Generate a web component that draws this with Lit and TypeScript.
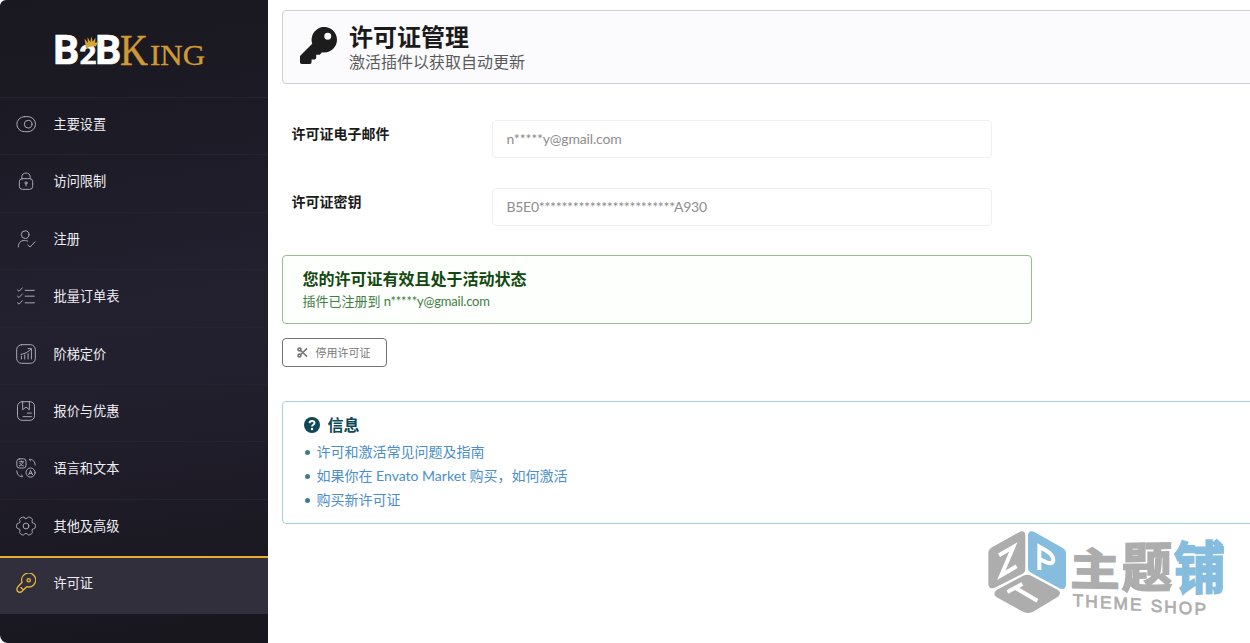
import { LitElement, html, css, svg } from "lit";
import { customElement } from "lit/decorators.js";

const icons = {
  toggle: svg`<rect x="1" y="3.2" width="22.400" height="18" rx="9"/><circle cx="14.600" cy="12.200" r="4.600"/>`,
  lock: svg`<rect x="4" y="9.2" width="16" height="12.8" rx="3.6"/><path d="M7 9V6.8C7 1 17 1 17 6.8V9"/><circle cx="12" cy="14.3" r="1.300"/><path d="M12 15.5v2.4"/>`,
  user: svg`<circle cx="11" cy="6.8" r="4.6"/><path d="M2.8 21.5c0-7 5-8 8.500-7.600q1.500 0 2.800.7M14.200 19.200l2.700 2.400 6-6.300"/>`,
  list: svg`<path d="M11 5.200h11M11 12.200h11M11 20.200h11M1.800 4.700l1.800 1.700 4-4.200M1.800 12.100l1.800 1.700 4-4.200M1.800 20.100l1.800 1.700 4-4.200"/>`,
  chart: svg`<rect x=".8" y=".8" width="22.4" height="22.4" rx="6"/><path d="M6.500 18v-3.500M10.500 18v-5M14.500 18v-6.500M18.500 18V9.500M6 12.500c5-.8 9-3.200 12-6.500M14.500 5.500H18.500V9"/>`,
  note: svg`<rect x="1.800" y=".8" width="20.4" height="22.4" rx="5.500"/><path d="M8 1v9.500l4-3.300 4 3.300V1M13.500 14.500h5M8.500 18.800h10"/>`,
  lang: svg`<rect x="1" y="1" width="11" height="11" rx="3"/><circle cx="17.500" cy="17.500" r="5.500"/><path d="M4 4.500h5M6.500 3.500v1M8.500 4.800C7.500 7.500 6 9 4 9.500M4.800 6.500c1 1.800 2.400 2.600 4.200 3M15.200 20l2.300-5 2.300 5M16 18.500h3M1 15.500c0 4 2.500 7 7 7l-1.200-2M23 8.500c0-4-2.500-7-7-7l1.200 2"/>`,
  gear: svg`<circle cx="12" cy="12" r="3.500"/><path d="M10 2Q12 4.800 14 2Q15 .6 16.600 1.500L18.800 2.800Q20.400 3.900 19.400 5.500Q18.200 8.300 21 8.700Q23.300 9 23.300 11V13Q23.300 15 21 15.300Q18.200 15.700 19.400 18.500Q20.400 20.100 18.800 21.200L16.600 22.500Q15 23.400 14 22Q12 19.200 10 22Q9 23.400 7.400 22.500L5.200 21.200Q3.600 20.100 4.600 18.500Q5.800 15.700 3 15.300Q.7 15 .7 13V11Q.7 9 3 8.700Q5.800 8.300 4.600 5.500Q3.600 3.900 5.200 2.800L7.400 1.500Q9 .6 10 2Z"/>`,
  key: svg`<path d="M21.200 14.300a8.400 8.400 0 0 1-8.300 2.100L8.200 21.100C6.900 22.800 4.900 23.400 3 22.800C1.400 22.200 1 20 1.300 18.600Q1.500 17.200 2.600 16.100L7.300 11.200A8.400 8.400 0 1 1 21.200 14.300ZM6 17.500l2.500 2.500"/><circle cx="15.200" cy="8.700" r="2"/>`,
};

const menu: { label: string; icon: keyof typeof icons; active?: boolean }[] = [
  { label: "主要设置", icon: "toggle" },
  { label: "访问限制", icon: "lock" },
  { label: "注册", icon: "user" },
  { label: "批量订单表", icon: "list" },
  { label: "阶梯定价", icon: "chart" },
  { label: "报价与优惠", icon: "note" },
  { label: "语言和文本", icon: "lang" },
  { label: "其他及高级", icon: "gear" },
  { label: "许可证", icon: "key", active: true },
];

@customElement("side-menu")
class SideMenu extends LitElement {
  static styles = css`
    :host { display: block; width: 268px; flex: none; border-radius: 6px 0 0 8px; overflow: hidden;
      background: linear-gradient(172deg, #19171f 0%, #1c1a24 18%, #232030 48%, #211e2c 66%, #1b1922 84%, #18161d 100%); }
    .logo { height: 97px; box-sizing: border-box; padding: 15px 0 0 50px; }
    .logo svg { display: block; }
    .white { fill: #fff; font: 700 41px Roboto, sans-serif; stroke: #fff; stroke-width: .7; }
    .two { font-size: 26px; }
    .gold { fill: #cf9a35; stroke: #cf9a35; stroke-width: .5; font: 45px "Liberation Serif", serif; }
    .small { font-size: 29.500px; stroke-width: .3; }
    .item { height: 57.4px; box-sizing: border-box; display: flex; align-items: center; gap: 17.500px; padding: 0 16px 4.500px;
      border-top: 1px solid #252330; color: #eeedf2; font: 13.200px/20px Lato, "Noto Sans CJK SC", sans-serif; }
    .item svg { width: 20px; height: 20px; fill: none; stroke: #aaa8b3; stroke-width: 1.200; stroke-linecap: round; stroke-linejoin: round; }
    .item.active { background: #322f3d; border-top: 2px solid #e8ac35; padding-bottom: 5.500px; }
    .active svg { stroke: #e9b63e; stroke-width: 1.600; }
  `;
  render() {
    return html`
      <div class="logo">
        <svg width="170" height="70" viewBox="50 15 170 70">
          <text class="white" x="53.300" y="64.300" textLength="26" lengthAdjust="spacingAndGlyphs">B</text>
          <text class="white two" x="79.500" y="64.300" textLength="17" lengthAdjust="spacingAndGlyphs">2</text>
          <text class="white" x="95.300" y="64.300" textLength="26" lengthAdjust="spacingAndGlyphs">B</text>
          <path fill="#d9a436" d="M86 48.500l-1.500-10 3.300 4.500-.3-6 2.800 5 1-5.500 1.500 5.200 2.700-4-.3 5.200 4-2-3.500 5.500q-5-.5-9.700 2.100z"/>
          <text class="gold" x="120" y="64.500" textLength="28" lengthAdjust="spacingAndGlyphs">K</text>
          <text class="gold small" x="150" y="64.500" textLength="55" lengthAdjust="spacingAndGlyphs">ING</text>
        </svg>
      </div>
      ${menu.map((m) => html`<div class="item ${m.active ? "active" : ""}"><svg viewBox="0 0 24 24">${icons[m.icon]}</svg><span>${m.label}</span></div>`)}
    `;
  }
}

@customElement("shop-mark")
class ShopMark extends LitElement {
  static styles = css`
    :host { display: block; }
    svg { display: block; }
    .g { fill: #adadad; }
    .b { fill: #86bddf; }
    .line { fill: none; stroke: #fff; stroke-width: 12; }
    .cjk { font: 700 140px "Noto Sans CJK SC", sans-serif; stroke-width: 5; }
    .g.cjk { stroke: #adadad; }
    .b.cjk { stroke: #86bddf; }
    .en { font: 52px "Liberation Sans", sans-serif; stroke: #adadad; stroke-width: 2; }
  `;
  render() {
    return html`<svg width="280" height="143" viewBox="0 0 840 429">
      <path class="g" d="M150 95Q166 90 166 108V208Q166 216 158 221L74 263Q55 270 55 250V160Q55 148 66 142Z"/>
      <path class="b" d="M192 95Q174 90 174 108V203Q174 213 183 218L268 265Q288 272 288 252V160Q288 150 278 144Z"/>
      <path class="g" d="M160 227Q172 221 184 227L264 270Q276 278 264 290L192 334Q174 344 156 334L80 292Q66 281 80 270Z"/>
      <path class="line" d="M87 166L130 141L94 226L140 199M208 210V140L229 152Q250 164 250 181Q248 194 230 187L208 177M112 276L157 252M137 264L202 302"/>
      <text class="g cjk" transform="translate(301 255) skewY(1) scale(1.060 .95)">主</text>
      <text class="g cjk" transform="translate(455 262) skewY(-1) scale(1.080 1.150)">题</text>
      <text class="b cjk" transform="translate(612 268) skewY(-1) scale(1.100 1.220)">铺</text>
      <text class="g en" transform="translate(308 318) skewY(4)" textLength="400">THEME SHOP</text>
    </svg>`;
  }
}

@customElement("app-root")
class AppRoot extends LitElement {
  static styles = css`
    :host { display: flex; position: relative; width: 1250px; height: 643px; overflow: hidden; background: #fff;
      font-family: Lato, "Noto Sans CJK SC", sans-serif; }
    main { flex: none; width: 982px; box-sizing: border-box; padding: 10px 0 0 14px; }
    .head { box-sizing: border-box; height: 74px; width: 990px; display: flex; gap: 12.500px; padding: 12px 16.500px; border: 1px solid #cfcfd1; border-radius: 4px; background: #fbfbfd; }
    .head svg { margin-top: 4px; width: 37px; height: 37px; fill: #1c1c1d; }
    .title { font-size: 24px; line-height: 28px; font-weight: 700; color: #1b1b1c; }
    .sub { font-size: 16px; line-height: 22px; color: #5a5a5b; }
    .form { display: grid; gap: 30px; padding: 36px 0 0 9.500px; }
    .row { display: grid; grid-template-columns: 200.500px 500px; }
    .label { font-size: 14px; line-height: 27px; font-weight: 700; color: #1b1b1c; }
    .input { box-sizing: border-box; height: 38px; padding: 0 13.500px; border: 1px solid #f0f0f0; border-radius: 4px; font-size: 14px; line-height: 35px; color: #8d8d8d; letter-spacing: -.17px; }
    .key { letter-spacing: -.28px; }
    .ok { box-sizing: border-box; width: 750px; height: 69px; margin-top: 29px; padding: 12px 19.500px; border: 1px solid #96bd8c; border-radius: 4px; background: #fdfffc; }
    .ok-title { font-size: 16px; line-height: 22px; font-weight: 700; color: #12480f; }
    .ok-sub { font-size: 13px; line-height: 22px; color: #3f7d42; }
    .mail { letter-spacing: -.2px; }
    .btn { box-sizing: border-box; display: flex; align-items: center; gap: 7.500px; width: 105px; height: 29px; margin-top: 14px; padding: 0 14px 1px; border: 1px solid #737373; border-radius: 4px; font-size: 11px; color: #777; }
    .btn svg { width: 11px; height: 11px; fill: none; stroke: #777; stroke-width: 1.800; }
    .info { box-sizing: border-box; width: 990px; height: 123px; margin-top: 34px; padding: 11px 20.500px; border: 1px solid #a3d3da; border-radius: 4px; }
    .info-title { display: flex; align-items: center; gap: 8px; font-size: 16px; line-height: 24px; font-weight: 700; color: #0d4858; }
    .info-title svg { width: 16px; height: 16px; }
    .link { display: flex; align-items: center; gap: 7px; height: 24px; font-size: 14px; line-height: 24px; color: #4b8ec9; }
    .links { padding-top: 3px; }
    .dot { width: 5px; height: 5px; margin-left: 1px; border-radius: 50%; background: #3f7c90; }
    .mark { position: absolute; right: 0; bottom: 0; }
  `;
  render() {
    const links = ["许可和激活常见问题及指南", "如果你在 Envato Market 购买，如何激活", "购买新许可证"];
    return html`
      <side-menu></side-menu>
      <main>
        <div class="head">
          <svg viewBox="0 0 512 512"><path d="M512 176c0 97-79 176-176 176-11 0-22-1-32-3l-24 27a24 24 0 0 1-18 8h-38v40a24 24 0 0 1-24 24h-40v40a24 24 0 0 1-24 24H24a24 24 0 0 1-24-24v-78a24 24 0 0 1 7-17l162-162a176 176 0 1 1 343-55zM336 128a48 48 0 1 0 96 0 48 48 0 0 0-96 0z"/></svg>
          <div><div class="title">许可证管理</div><div class="sub">激活插件以获取自动更新</div></div>
        </div>
        <div class="form">
          <div class="row"><div class="label">许可证电子邮件</div><div class="input">n*****y@gmail.com</div></div>
          <div class="row"><div class="label">许可证密钥</div><div class="input key">B5E0************************A930</div></div>
        </div>
        <div class="ok"><div class="ok-title">您的许可证有效且处于活动状态</div><div class="ok-sub">插件已注册到<span class="mail"> n*****y@gmail.com</span></div></div>
        <div class="btn"><svg viewBox="0 0 12 12"><circle cx="2.700" cy="2.700" r="1.600"/><circle cx="2.700" cy="9.300" r="1.600"/><path d="M4 3.800L11 10.500M4 8.200L11 1.500"/></svg><span>停用许可证</span></div>
        <div class="info">
          <div class="info-title"><svg viewBox="0 0 16 16"><circle cx="8" cy="8" r="8" fill="#0d4858"/><path d="M5.500 6.100C5.700 3.200 10.500 3.200 10.500 6.100C10.500 7.800 8 7.800 8 9.500" fill="none" stroke="#fff" stroke-width="1.900"/><circle cx="8" cy="12" r="1.200" fill="#fff"/></svg><span>信息</span></div>
          <div class="links">${links.map((l) => html`<div class="link"><i class="dot"></i><span>${l}</span></div>`)}</div>
        </div>
      </main>
      <shop-mark class="mark"></shop-mark>
    `;
  }
}
